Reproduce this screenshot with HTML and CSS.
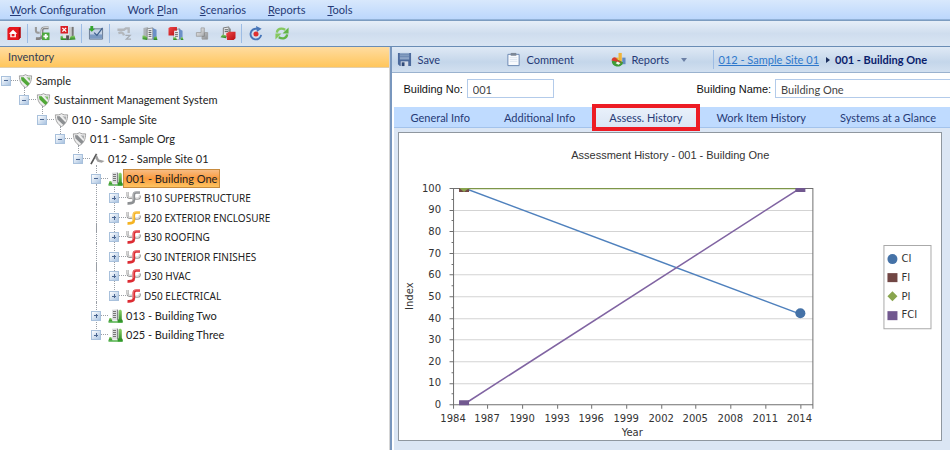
FILE: index.html
```
<!DOCTYPE html>
<html lang="en">
<head>
<meta charset="utf-8">
<title>Inventory - Building One</title>
<link rel="stylesheet" href="styles.css">
</head>
<body>
<svg class="defs" aria-hidden="true">
  <defs>
    <linearGradient id="steel" x1="0" y1="0" x2="1" y2="1"><stop offset="0" stop-color="#f2f2f2"/><stop offset="1" stop-color="#8b8f94"/></linearGradient>
    <linearGradient id="leaf" x1="0" y1="0" x2="0" y2="1"><stop offset="0" stop-color="#8fd46a"/><stop offset="1" stop-color="#23831f"/></linearGradient>
    <linearGradient id="rose" x1="0" y1="0" x2="1" y2="1"><stop offset="0" stop-color="#f04a4a"/><stop offset="1" stop-color="#b80c12"/></linearGradient>
  </defs>
  <symbol id="shield" viewBox="0 0 14 14">
    <path d="M7 .6C5.200 2 3 2 .9 1.800.8 7.200 3 11.500 7 13.500 11 11.500 13.200 7.200 13.100 1.800 11 2 8.800 2 7 .6z" fill="#eee" stroke="#999" stroke-width=".9"/>
    <path d="M2.400 3.300c1 .1 1.700 0 2.400-.2l6.300 6.300c-.6 1.200-1.300 2-2.200 2.700L3 6.400z" fill="currentColor"/>
    <path d="M8 2.900c1.300.5 2.400.6 3.800.5-.1 1.400-.3 2.600-.7 3.600z" fill="currentColor" fill-opacity=".7"/>
  </symbol>
  <symbol id="site" viewBox="0 0 16 14">
    <path d="M1 12.500L7 1.500" stroke="#555" stroke-width="1.800" fill="none"/>
    <path d="M7 2L9.500 7.500 15.500 9 12.500 11 8 10 5.500 6z" fill="#a0a0a0"/>
  </symbol>
  <symbol id="building" viewBox="0 0 15 14">
    <path d="M4 .8L9 .3V11.500H4z" fill="#dcdddf"/><path d="M9 .3L10.200 1V11.500H9z" fill="#85888b"/>
    <path d="M5 2.500H8M5 4.500H8M5 6.500H8M5 8.500H8" stroke="#777"/>
    <path d="M1.500 9h1.800L4.500 12.500H.5z" fill="url(#leaf)"/>
    <path d="M10.600 2.500c0-2.200 3.200-2.200 3.200 0V10l.9 1.500v2h-5V11l.9-1z" fill="url(#leaf)"/>
    <path d="M.5 13h14" stroke="#35a52d" stroke-width="1.300"/>
  </symbol>
  <symbol id="pipe" viewBox="0 0 15 14">
    <path d="M1.500 1v3.500C1.500 7 4 7.500 6 6.500" fill="none" stroke="#999" stroke-width="2.200"/>
    <path d="M1.300 1v3.500C1.500 6.500 4 7 6 6" fill="none" stroke="#e6e6e6"/>
    <path d="M9 7.800h2.500c2.500 0 2.500-1.500 2.300-3.300" fill="none" stroke="#999" stroke-width="2"/>
    <path d="M9.500 7.300H12c1.500 0 1.500-1.300 1.500-2.800" fill="none" stroke="#e8e8e8"/>
    <path d="M14 1.500h-3.500C8.500 1.500 7.800 2.500 7.800 4v5.500c0 2.300-2 3-6.300 2.800" fill="none" stroke="currentColor" stroke-width="2.700"/>
    <path d="M14 1h-3.500C8.300 1 7.300 2.300 7.300 4v5" fill="none" stroke="#fff" stroke-opacity=".4" stroke-width=".8"/>
  </symbol>
  <symbol id="home" viewBox="0 0 16 16">
    <path d="M1 3l2-2h12v11l-2 3H1z" fill="#e6161d"/><path d="M13 3l2-2v11l-2 3z" fill="#9d0c10"/>
    <path d="M7 4L2.500 8.200H4V12h6V8.200h1.500z" fill="#fff"/><path d="M5.500 8.500h3V11h-3z" fill="#e6161d"/>
  </symbol>
  <symbol id="pipe-add" viewBox="0 0 16 16">
    <path d="M1.500 1v4c0 2 2 2.500 4 2" fill="none" stroke="#9a9a9a" stroke-width="2.200"/>
    <path d="M15 2h-4C9 2 8 3 8 5v5.500c0 2.500-2 3.200-6.500 3" fill="none" stroke="#858585" stroke-width="3"/>
    <path d="M15 1.500h-4C9 1.500 7.500 2.500 7.500 5v5" fill="none" stroke="#ddd"/>
    <path d="M8 7h8v8H8z" fill="#4da83d"/><path d="M12 8.500v5M9.500 11h5" stroke="#fff" stroke-width="2"/>
  </symbol>
  <symbol id="building-remove" viewBox="0 0 16 16">
    <path d="M9 1h5v12H9z" fill="#c9cbcd"/><path d="M3 8h6v5H3z" fill="#e4e4e4"/><path d="M12 1h2v12h-2z" fill="#777"/>
    <path d="M0 14.500V11l2-1 1 3h3v2H1zM9 15l2-4 4-1 1 4.500z" fill="url(#leaf)"/><path d="M6 10h3v5H6z" fill="#555"/>
    <path d="M0 0h8v8H0z" fill="#da1d24"/><path d="M2 2l4 4m0-4l-4 4" stroke="#fff" stroke-width="1.500"/>
  </symbol>
  <symbol id="plan" viewBox="0 0 16 16">
    <path d="M1 3h14v11H1z" fill="#c3d2e5" stroke="#66788f"/><path d="M1.500 9h13v4.500h-13z" fill="#7b9ac2"/>
    <path d="M6 7l3 3 6-8" fill="none" stroke="#3d5f8e" stroke-width="1.300"/><path d="M0 3h2V0h3v3h2L3.500 6z" fill="#35a52d"/>
  </symbol>
  <symbol id="faucet" viewBox="0 0 16 16">
    <path d="M1 4h7l2-1.500h3v5M2 7.500c3-1 5-1 6 2.500" fill="none" stroke="#b3b7bc" stroke-width="2.500"/>
    <path d="M9.500 10h5l-4 4h5" fill="none" stroke="#a6acb3" stroke-width="1.400"/>
  </symbol>
  <symbol id="building-doc" viewBox="0 0 16 16">
    <path d="M1 2l5-1v11H1z" fill="#aeb3b8"/><path d="M5 3l6-1v12H5z" fill="#eceff2" stroke="#777" stroke-width=".8"/>
    <path d="M11 2l4 2v10l-4 1z" fill="#6b90c7"/><path d="M6.500 5h3M6.500 7h3M6.500 9h3M6.500 11h3" stroke="#555"/>
    <path d="M0 14v-4h2l3 2v3zM12 15v-3l3-1 1 4z" fill="url(#leaf)"/>
  </symbol>
  <symbol id="building-red" viewBox="0 0 16 16">
    <path d="M6 4l6-1v11H6z" fill="#e8ebee" stroke="#777" stroke-width=".8"/><path d="M11 3l4 2v9h-4z" fill="#6b90c7"/>
    <path d="M7.500 6H10M7.500 8H10M7.500 10H10" stroke="#555"/><path d="M0 2l2-1h7v5l-2 4H0z" fill="url(#rose)"/>
    <path d="M6 5h5v9H6z" fill="#e8ebee"/><path d="M7 7h3M7 9h3M7 11h3" stroke="#666"/>
    <path d="M5 15v-3h3l1 3zM13 15v-3h2l1 3z" fill="url(#leaf)"/>
  </symbol>
  <symbol id="fitting" viewBox="0 0 16 16">
    <path d="M7 2h3.500v5H14v7H8v-3H2V7h5z" fill="url(#steel)" stroke="#999" stroke-width=".8"/><path d="M10.500 7v4H8" fill="none" stroke="#888"/>
  </symbol>
  <symbol id="building-cube" viewBox="0 0 16 16">
    <path d="M3 2l6-1v10H3z" fill="#e4e6e8" stroke="#777"/><path d="M4.500 4H8M4.500 6H8" stroke="#555"/><path d="M9 2l2 1v5H9z" fill="#888"/>
    <path d="M0 12l2-3 4 1v3z" fill="url(#leaf)"/><path d="M6 8l3-2h7v7l-2 2H7z" fill="url(#rose)"/>
  </symbol>
  <symbol id="undo" viewBox="0 0 16 16">
    <path d="M13.500 9.500A5.700 5.700 0 1 1 9 3" fill="none" stroke="#4775b8" stroke-width="2"/><path d="M8 0l6 3-5 3.500z" fill="#4775b8"/>
    <circle cx="8" cy="8.500" r="2.700" fill="#df3030"/>
  </symbol>
  <symbol id="refresh" viewBox="0 0 16 16">
    <path d="M2.500 7C3 3 7 1.500 11.500 4" fill="none" stroke="#86c85f" stroke-width="2.500"/><path d="M15 1.500v6.500H8.500z" fill="#62b545"/>
    <path d="M13.500 9c-.5 4-4.500 5.500-9 3" fill="none" stroke="#62b545" stroke-width="2.500"/><path d="M1 14.500V8h6.500z" fill="#86c85f"/>
  </symbol>
  <symbol id="save" viewBox="0 0 16 16">
    <path d="M1 1h14v14H3l-2-2z" fill="#4c6a9c"/><path d="M3 1h10v7H3z" fill="#8ea6c7"/><path d="M3 3h10M3 5h10" stroke="#6784ae"/>
    <path d="M4 10h8v5H4z" fill="#d4dce8"/><path d="M5 11h3v4H5z" fill="#304b79"/>
  </symbol>
  <symbol id="clipboard" viewBox="0 0 14 16">
    <path d="M1 2.500h12v12H1z" fill="#f8fafd" stroke="#6784b0"/><path d="M4 1h6v3H4z" fill="#7c8796"/><path d="M3 6h8M3 8h8M3 10h8" stroke="#dce5f0"/>
  </symbol>
  <symbol id="charts" viewBox="0 0 16 16">
    <path d="M5 6h3v5H5z" fill="#e8b42d"/><path d="M8 1h3.500v10H8z" fill="#f0b43a"/><path d="M12 6h3.500v7H12z" fill="#638bc1"/>
    <path d="M1 9a6 5.500 0 0 0 12 2L6.500 8z" fill="#3f9c38"/><path d="M.5 9c1-4.500 5-4.500 6-1l5 3.500z" fill="#d83a2e"/>
    <path d="M5 12l2-2 3 2-2 1.500z" fill="#f4f8ef"/>
  </symbol>
</svg>

<nav class="menu" aria-label="Main menu">
  <a href="#"><u>W</u>ork Configuration</a>
  <a href="#">Work <u>P</u>lan</a>
  <a href="#"><u>S</u>cenarios</a>
  <a href="#"><u>R</u>eports</a>
  <a href="#"><u>T</u>ools</a>
</nav>

<div class="toolbar" role="toolbar" aria-label="Actions">
  <button aria-label="Home"><svg><use href="#home"/></svg></button>
  <i class="sep"></i>
  <button aria-label="Add system"><svg><use href="#pipe-add"/></svg></button>
  <button aria-label="Remove building"><svg><use href="#building-remove"/></svg></button>
  <i class="sep"></i>
  <button aria-label="Plan"><svg><use href="#plan"/></svg></button>
  <i class="sep"></i>
  <button aria-label="Fixtures"><svg><use href="#faucet"/></svg></button>
  <button aria-label="Copy building"><svg><use href="#building-doc"/></svg></button>
  <button aria-label="Move building"><svg><use href="#building-red"/></svg></button>
  <button aria-label="Section"><svg><use href="#fitting"/></svg></button>
  <button aria-label="Component"><svg><use href="#building-cube"/></svg></button>
  <i class="sep"></i>
  <button aria-label="Undo"><svg><use href="#undo"/></svg></button>
  <button aria-label="Refresh"><svg><use href="#refresh"/></svg></button>
</div>

<div class="workspace">
  <aside class="inventory">
    <h2>Inventory</h2>
    <ul class="tree">
      <li class="l0"><button class="exp" aria-label="Collapse"></button><svg class="green"><use href="#shield"/></svg><span>Sample</span></li>
      <li class="l1"><button class="exp" aria-label="Collapse"></button><svg class="green"><use href="#shield"/></svg><span>Sustainment Management System</span></li>
      <li class="l2"><button class="exp" aria-label="Collapse"></button><svg class="gray"><use href="#shield"/></svg><span>010 - Sample Site</span></li>
      <li class="l3"><button class="exp" aria-label="Collapse"></button><svg class="gray"><use href="#shield"/></svg><span>011 - Sample Org</span></li>
      <li class="l4"><button class="exp" aria-label="Collapse"></button><svg><use href="#site"/></svg><span>012 - Sample Site 01</span></li>
      <li class="l5"><button class="exp" aria-label="Collapse"></button><svg><use href="#building"/></svg><span class="selected">001 - Building One</span></li>
      <li class="l6"><button class="exp plus" aria-label="Expand"></button><svg class="gray"><use href="#pipe"/></svg><span>B10 SUPERSTRUCTURE</span></li>
      <li class="l6"><button class="exp plus" aria-label="Expand"></button><svg class="amber"><use href="#pipe"/></svg><span>B20 EXTERIOR ENCLOSURE</span></li>
      <li class="l6"><button class="exp plus" aria-label="Expand"></button><svg class="red"><use href="#pipe"/></svg><span>B30 ROOFING</span></li>
      <li class="l6"><button class="exp plus" aria-label="Expand"></button><svg class="red"><use href="#pipe"/></svg><span>C30 INTERIOR FINISHES</span></li>
      <li class="l6"><button class="exp plus" aria-label="Expand"></button><svg class="red"><use href="#pipe"/></svg><span>D30 HVAC</span></li>
      <li class="l6"><button class="exp plus" aria-label="Expand"></button><svg class="red"><use href="#pipe"/></svg><span>D50 ELECTRICAL</span></li>
      <li class="l5"><button class="exp plus" aria-label="Expand"></button><svg><use href="#building"/></svg><span>013 - Building Two</span></li>
      <li class="l5"><button class="exp plus" aria-label="Expand"></button><svg><use href="#building"/></svg><span>025 - Building Three</span></li>
    </ul>
  </aside>

  <main class="detail">
    <div class="actions">
      <button class="save"><svg><use href="#save"/></svg>Save</button>
      <button class="comment"><svg><use href="#clipboard"/></svg>Comment</button>
      <button class="reports"><svg><use href="#charts"/></svg>Reports<i class="caret"></i></button>
      <i class="sep"></i>
      <nav class="crumbs" aria-label="Breadcrumb"><a href="#">012 - Sample Site 01</a><i class="next"></i><b>001 - Building One</b></nav>
    </div>

    <form class="fields">
      <div class="field number"><label for="no">Building No:</label><input id="no" type="text" value="001"></div>
      <div class="field name"><label for="name">Building Name:</label><input id="name" type="text" value="Building One"></div>
    </form>

    <div class="content">
      <nav class="tabs" aria-label="Building sections">
        <a href="#">General Info</a>
        <a href="#">Additional Info</a>
        <a href="#" class="active" aria-current="page">Assess. History</a>
        <a href="#">Work Item History</a>
        <a href="#">Systems at a Glance</a>
      </nav>
      <div class="chart">
        <svg viewBox="0 0 542 307" role="img" aria-label="Assessment history chart">
          <defs><clipPath id="plot"><path d="M54 55h359v217H54z"/></clipPath></defs>
          <text class="title" x="271" y="26" text-anchor="middle">Assessment History - 001 - Building One</text>
          <g transform="translate(.5 .5)">
            <path class="grid" d="M54 77h359M54 98h359M54 120h359M54 141h359M54 163h359M54 185h359M54 206h359M54 228h359M54 250h359"/>
            <path class="axis" d="M54 55H413V275M54 55V275M50 271H413M50 55h4M50 77h4M50 98h4M50 120h4M50 141h4M50 163h4M50 185h4M50 206h4M50 228h4M50 250h4M52 66h2M52 87h2M52 109h2M52 131h2M52 152h2M52 174h2M52 195h2M52 217h2M52 239h2M52 260h2M88 271v4M123 271v4M158 271v4M192 271v4M227 271v4M262 271v4M296 271v4M331 271v4M366 271v4M401 271v4"/>
          </g>
          <g clip-path="url(#plot)">
            <path class="line ci" d="M65 55L401 181"/>
            <path class="fi-fill" d="M60 51h10v8H60z"/>
            <path class="line pi" d="M65 55.500H401"/>
            <path class="pi-fill" d="M65 48l6 6-6 5-6-5z"/>
            <path class="line fci" d="M65 271L401 55"/>
            <path class="fci-fill" d="M60 267h10v9H60zM396 51h10v8H396z"/>
            <circle class="ci-fill" cx="401" cy="180" r="5"/>
          </g>
          <g text-anchor="end">
            <text x="42" y="59">100</text><text x="42" y="80">90</text><text x="42" y="102">80</text><text x="42" y="124">70</text><text x="42" y="145">60</text><text x="42" y="167">50</text><text x="42" y="189">40</text><text x="42" y="210">30</text><text x="42" y="232">20</text><text x="42" y="253">10</text><text x="42" y="275">0</text>
          </g>
          <g text-anchor="middle">
            <text x="54" y="289">1984</text><text x="88" y="289">1987</text><text x="123" y="289">1990</text><text x="158" y="289">1993</text><text x="192" y="289">1996</text><text x="227" y="289">1999</text><text x="262" y="289">2002</text><text x="296" y="289">2005</text><text x="331" y="289">2008</text><text x="366" y="289">2011</text><text x="400" y="289">2014</text>
            <text x="233" y="303">Year</text>
            <text transform="translate(14 163) rotate(-90)">Index</text>
          </g>
          <path class="legend" d="M484.500 112.500h47v83h-47z"/>
          <circle class="ci-fill" cx="493" cy="126" r="5"/><text x="502" y="129">CI</text>
          <path class="fi-fill" d="M488 140h10v9H488z"/><text x="502" y="148">FI</text>
          <path class="pi-fill" d="M493 158l5 5-5 5-5-5z"/><text x="502" y="167">PI</text>
          <path class="fci-fill" d="M488 178h10v9H488z"/><text x="502" y="185">FCI</text>
        </svg>
      </div>
    </div>
  </main>
</div>
</body>
</html>
```
FILE: styles.css
```
* { box-sizing: border-box; }
body {
  margin: 0;
  min-height: 100vh;
  display: flex;
  flex-direction: column;
  font: 11px/16px Lato, "Noto Sans", sans-serif;
  color: #222;
  background: #fff;
}
button { border: 0; padding: 0; background: none; font: inherit; color: inherit; }
a { color: inherit; text-decoration: none; }
ul, h2 { margin: 0; padding: 0; list-style: none; }
.defs { position: absolute; width: 0; height: 0; }

.menu {
  display: flex;
  gap: 22px;
  height: 20px;
  padding: 2px 10px;
  color: #263a76;
  background: linear-gradient(#d8e8fc, #bcd7fc);
  border-bottom: 1px solid #92b2d8;
}
.toolbar {
  display: flex;
  align-items: center;
  gap: 6px;
  height: 27px;
  padding: 0 4px;
  background: linear-gradient(#e6eef8, #cfddee 50%, #d9e5f3);
  border-top: 1px solid #7c9cc0;
  border-bottom: 1px solid #6a8db5;
}
.toolbar button { display: flex; justify-content: center; width: 20px; }
.toolbar svg { width: 16px; height: 15px; }
.toolbar .sep { margin: 0 -2px 0 -3px; }
.sep { width: 1px; height: 19px; background: #9dbce4; }

.workspace { flex: 1; display: flex; }
.inventory { flex: 0 0 41%; border-right: 1px solid #d5d5d5; }
.inventory h2 {
  height: 21px;
  padding: 2px 8px;
  font: inherit;
  color: #333c55;
  background: linear-gradient(#ffdca0, #ffc65c);
  border-bottom: 1px solid #e2cfae;
}
.tree { display: grid; grid-auto-rows: 1fr; height: 274px; margin-top: 3px; }
.tree li { --x: 1px; position: relative; display: flex; align-items: center; padding-left: var(--x); }
.tree .l1 { --x: 19px; }
.tree .l2 { --x: 37px; }
.tree .l3 { --x: 55px; }
.tree .l4 { --x: 73px; }
.tree .l5 { --x: 91px; }
.tree .l6 { --x: 109px; font-family: "Noto Sans", sans-serif; font-size: 10px; }
.tree li:not(.l0)::before {
  content: "";
  position: absolute;
  left: calc(var(--x) + 5px);
  top: -4px;
  height: 10px;
  border-left: 1px dotted #9a9fa6;
}
.tree .l6 + .l6::before, .tree .l5 + .l5::before { top: -8px; height: 14px; }
.tree .l6::after {
  content: "";
  position: absolute;
  left: 96px;
  top: -4px;
  bottom: -4px;
  border-left: 1px dotted #9a9fa6;
}
.tree svg { width: 15px; height: 14px; flex: none; margin-left: 7px; }
.tree span { margin-left: 1px; padding: 0 2px; white-space: nowrap; }
.tree .selected {
  margin-left: 0;
  line-height: 17px;
  border: 1px solid #c88b3e;
  background: linear-gradient(#f7bc83, #fb9b3e 50%, #fdc460);
}
.exp {
  position: relative;
  z-index: 1;
  width: 10px;
  height: 10px;
  flex: none;
  border: 1px solid #a9c1dc;
  background: linear-gradient(#4a6590, #4a6590) 50% 50% / 4px 1px no-repeat, linear-gradient(135deg, #fff, #a9c3e1);
}
.exp::after { content: ""; position: absolute; left: 9px; top: 3px; width: 7px; border-top: 1px dotted #9a9fa6; }
.plus::before { content: ""; position: absolute; left: 4px; top: 2px; width: 1px; height: 4px; background: #4a6590; }
.green { color: #51a838; }
.gray { color: #8c8f92; }
.amber { color: #f5b321; }
.red { color: #dd2b32; }

.detail { flex: 1; min-width: 0; display: flex; flex-direction: column; border-left: 2px solid #7896bd; }
.actions {
  display: flex;
  align-items: center;
  height: 26px;
  padding-left: 5px;
  color: #263a76;
  background: linear-gradient(#dfe9f5, #c4d6ea 60%, #d2e0f0);
  border-bottom: 1px solid #9ab2ce;
}
.actions button { display: flex; align-items: center; gap: 6px; white-space: nowrap; }
.actions svg { width: 15px; height: 15px; }
.save { width: 109px; }
.comment { width: 105px; }
.reports { width: 102px; }
.caret { margin-left: 6px; border: 3px solid transparent; border-top: 4px solid #6b7fa5; border-bottom: 0; }
.crumbs { display: flex; align-items: center; padding-left: 5px; white-space: nowrap; }
.crumbs a { color: #2e78cc; text-decoration: underline; }
.crumbs b { color: #09206b; }
.next { margin: 0 5px 0 7px; border: 3px solid transparent; border-left: 4px solid #1c2f5e; border-right: 0; }

.fields { display: flex; padding: 6px 0 9px 12px; }
.field { display: flex; align-items: center; gap: 4px; }
.field label { font-family: "Liberation Sans", sans-serif; font-size: 11px; color: #111; white-space: nowrap; }
.number { flex: 0 0 293px; }
.name { flex: 1; min-width: 0; }
.field input {
  width: 87px;
  height: 19px;
  padding: 2px 5px 0;
  border: 1px solid #b3cbea;
  font: inherit;
  color: #444;
}
.name input { width: auto; flex: 1; min-width: 0; border-right: 0; }

.content { flex: 1; margin-left: 2px; background: #dbe6f4; }
.tabs {
  display: flex;
  height: 21px;
  color: #263a76;
  background: #bfdbff;
  border-bottom: 1px solid #a3c3ec;
  white-space: nowrap;
}
.tabs a { position: relative; padding: 3px 17px; }
.active { background: linear-gradient(#e9f1fb, #dbe6f4); }
.active::after { content: ""; position: absolute; inset: -3px 0 -4px 0; border: 4px solid #ed1c24; }
.chart { margin: 4px 8px 8px 4px; background: #fff; border: 1px solid #8f979f; }
.chart svg { display: block; width: 100%; height: auto; }
.chart text { font: 10px "DejaVu Sans", sans-serif; fill: #333; }
.chart .title { font: 11px "Liberation Sans", sans-serif; }
.grid, .axis, .line, .legend { fill: none; }
.grid { stroke: #d3d3d3; }
.axis { stroke: #707070; }
.legend { stroke: #aaa; }
.line { stroke-width: 1.5; }
.line.ci { stroke: #4f81bd; }
.line.pi { stroke: #7d9648; }
.line.fci { stroke: #8064a2; }
.ci-fill { fill: #4572a7; }
.fi-fill { fill: #714644; }
.pi-fill { fill: #89a54e; }
.fci-fill { fill: #71588f; }
```
